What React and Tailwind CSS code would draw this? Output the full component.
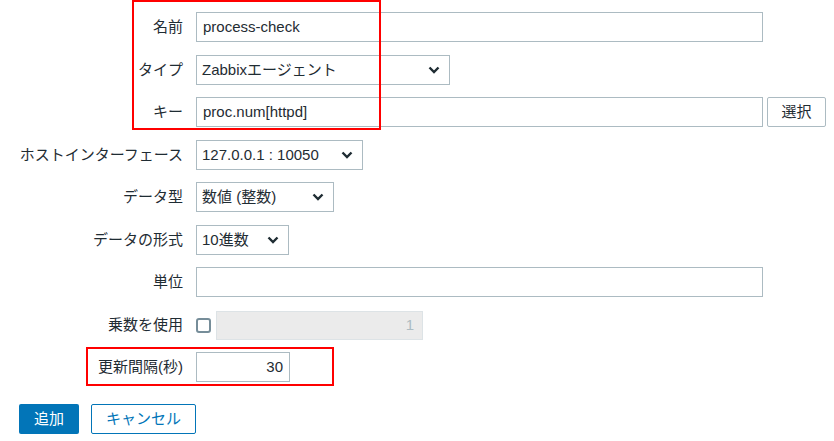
import React from 'react';

const font = { fontFamily: '"Liberation Sans", "Noto Sans CJK JP", sans-serif' };

const Chevron = () => (
  <svg width="12" height="8" viewBox="0 0 12 8" className="shrink-0">
    <path d="M1.5 1.5 L6 6 L10.5 1.5" fill="none" stroke="#1f2c33" strokeWidth="2.4" />
  </svg>
);

const Select = ({ value, width }) => (
  <div className={`${width} h-[30px] border border-[#acbbc2] bg-white flex items-center justify-between pl-[5px] pr-[9px] text-[15px] text-[#1f2c33]`}>
    <span>{value}</span>
    <Chevron />
  </div>
);

const Row = ({ label, children, className = '' }) => (
  <div className={`flex items-center h-[30px] ${className}`}>
    <div className="w-[184px] text-right pr-[1px] text-[15px] text-[#1f2c33] shrink-0">{label}</div>
    <div className="ml-[12px] flex items-center gap-[4px]">{children}</div>
  </div>
);

const TextInput = ({ value = '', width, align = 'left' }) => (
  <div className={`${width} h-[30px] border border-[#acbbc2] bg-white flex items-center px-[6px] text-[15px] text-[#1f2c33] ${align === 'right' ? 'justify-end' : ''}`}>
    {value}
  </div>
);

const App = () => {
  return (
    <div className="relative w-[834px] h-[441px] bg-white overflow-hidden" style={font}>
      <div className="flex flex-col pt-[12px]">
        <Row label="名前">
          <TextInput value="process-check" width="w-[567px]" />
        </Row>
        <Row label="タイプ" className="mt-[13px]">
          <Select value="Zabbixエージェント" width="w-[254px]" />
        </Row>
        <Row label="キー" className="mt-[12px]">
          <TextInput value="proc.num[httpd]" width="w-[567px]" />
          <button className="w-[59px] h-[30px] border border-[#acbbc2] rounded-[2px] bg-white text-[15px] text-[#1f2c33]">選択</button>
        </Row>
        <Row label="ホストインターフェース" className="mt-[13px]">
          <Select value="127.0.0.1 : 10050" width="w-[167px]" />
        </Row>
        <Row label="データ型" className="mt-[12px]">
          <Select value="数値 (整数)" width="w-[138px]" />
        </Row>
        <Row label="データの形式" className="mt-[13px]">
          <Select value="10進数" width="w-[93px]" />
        </Row>
        <Row label="単位" className="mt-[12px]">
          <TextInput width="w-[567px]" />
        </Row>
        <Row label="乗数を使用" className="mt-[13px]">
          <div className="w-[15px] h-[15px] border-2 border-[#768d99] rounded-[3px] bg-white" />
          <div className="ml-[1px] w-[207px] h-[29px] border border-[#dde3e6] bg-[#ebebeb] flex items-center justify-end px-[8px] text-[15px] text-[#acbbc2]">1</div>
        </Row>
        <Row label="更新間隔(秒)" className="mt-[12px]">
          <TextInput value="30" width="w-[94px]" align="right" />
        </Row>
        <div className="flex gap-[12px] pl-[19px] mt-[22px]">
          <button className="w-[60px] h-[30px] rounded-[2px] bg-[#0275b8] text-white text-[15px]">追加</button>
          <button className="w-[105px] h-[30px] rounded-[2px] border border-[#0275b8] bg-white text-[#0275b8] text-[15px]">キャンセル</button>
        </div>
      </div>

      {/* annotation boxes */}
      <div className="absolute left-[132px] top-0 w-[249px] h-[130px] border-2 border-[#ff0000]" />
      <div className="absolute left-[86px] top-[347px] w-[248px] h-[39px] border-2 border-[#ff0000]" />
    </div>
  );
};

export default App;
